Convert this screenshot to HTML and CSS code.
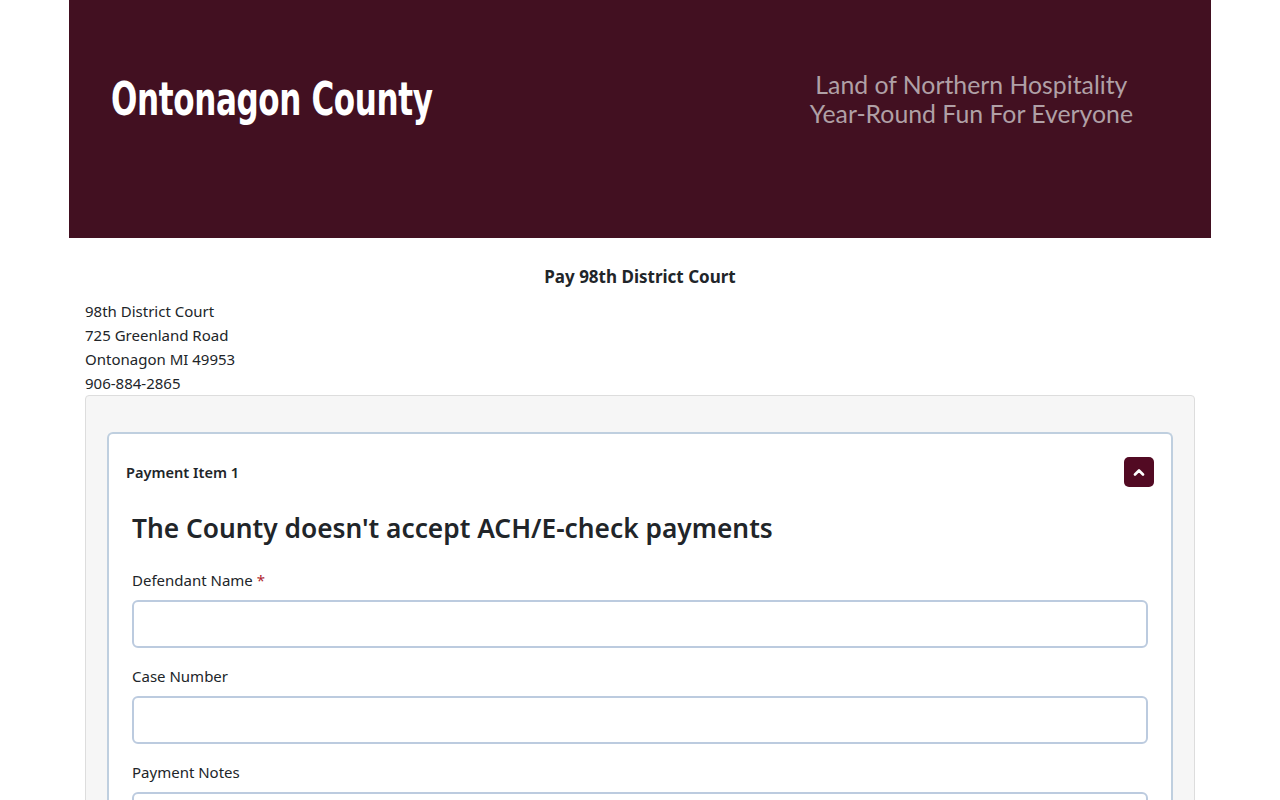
FILE: index.html
```html
<!DOCTYPE html>
<html>
<head>
<meta charset="utf-8">
<link rel="stylesheet" href="styles.css">
</head>
<body>
<div class="page">
  <header class="banner">
    <div class="logo">Ontonagon County</div>
    <div class="tagline">
      <div>Land of Northern Hospitality</div>
      <div>Year-Round Fun For Everyone</div>
    </div>
  </header>
  <main class="content">
    <h1 class="title">Pay 98th District Court</h1>
    <div class="address">
      <div>98th District Court</div>
      <div>725 Greenland Road</div>
      <div>Ontonagon MI 49953</div>
      <div>906-884-2865</div>
    </div>
    <section class="panel">
      <div class="card">
        <div class="card-head">
          <span class="card-title">Payment Item 1</span>
          <button class="toggle" type="button" aria-label="Collapse">
            <svg width="12" height="8" viewBox="0 0 12 8"><path d="M2 6.5 L6 2.5 L10 6.5" fill="none" stroke="#fff" stroke-width="2.6" stroke-linecap="round" stroke-linejoin="round"/></svg>
          </button>
        </div>
        <div class="card-body">
          <h2 class="notice">The County doesn't accept ACH/E-check payments</h2>
          <div class="field">
            <label class="label">Defendant Name <span class="req">*</span></label>
            <input class="input" type="text">
          </div>
          <div class="field">
            <label class="label">Case Number</label>
            <input class="input" type="text">
          </div>
          <div class="field">
            <label class="label">Payment Notes</label>
            <input class="input" type="text">
          </div>
        </div>
      </div>
    </section>
  </main>
</div>
</body>
</html>
```
FILE: styles.css
```css
html, body {
  margin: 0;
  padding: 0;
  background: #fff;
}
body {
  font-family: "Noto Sans", "Open Sans", sans-serif;
  color: #212529;
}
.page {
  width: 1142px;
  margin: 0 auto;
}
.banner {
  height: 238px;
  background: #421021;
  display: flex;
  justify-content: space-between;
  align-items: flex-start;
  padding: 0 78px 0 42px;
  box-sizing: border-box;
}
.logo {
  margin-top: 71px;
  font-family: "DejaVu Sans", "Liberation Sans", sans-serif;
  font-stretch: condensed;
  font-weight: bold;
  font-size: 46px;
  line-height: 56px;
  color: #fff;
  letter-spacing: -0.5px;
  transform: scaleX(0.75);
  transform-origin: left center;
  white-space: nowrap;
}
.tagline {
  margin-top: 70px;
  font-family: "Lato", sans-serif;
  font-size: 24.8px;
  line-height: 29px;
  color: #b0a0a6;
  text-align: center;
}
.content {
  padding: 0 16px;
}
.title {
  margin: 0;
  padding-top: 26px;
  font-size: 17px;
  line-height: 26px;
  font-weight: bold;
  text-align: center;
}
.address {
  margin-top: 9px;
  font-size: 15px;
  line-height: 24px;
}
.panel {
  margin-top: 0;
  background: #f6f6f6;
  border: 1px solid #ddd;
  border-radius: 4px;
  padding: 36px 21px 0;
  height: 420px;
}
.card {
  background: #fff;
  border: 2px solid #bfcfdf;
  border-bottom: none;
  border-radius: 6px 6px 0 0;
  padding: 23px 17px 0;
}
.card-head {
  display: flex;
  justify-content: space-between;
  align-items: center;
  height: 30px;
}
.card-title {
  font-size: 14.6px;
  font-weight: 600;
}
.toggle {
  width: 30px;
  height: 30px;
  border: none;
  border-radius: 5px;
  background: #520a23;
  padding: 0;
  display: flex;
  align-items: center;
  justify-content: center;
}
.card-body {
  padding: 0 6px 0 6px;
}
.notice {
  margin: 24px 0 0;
  font-size: 26.3px;
  line-height: 34px;
  font-weight: 600;
}
.field {
  margin-top: 25px;
}
.field + .field {
  margin-top: 18px;
}
.label {
  display: block;
  font-size: 15px;
  line-height: 20px;
  margin-bottom: 10px;
}
.req {
  color: #b01f2f;
}
.input {
  display: block;
  box-sizing: border-box;
  width: 100%;
  height: 48px;
  border: 2px solid #bccbdf;
  border-radius: 6px;
  background: #fff;
  margin: 0;
}
```
